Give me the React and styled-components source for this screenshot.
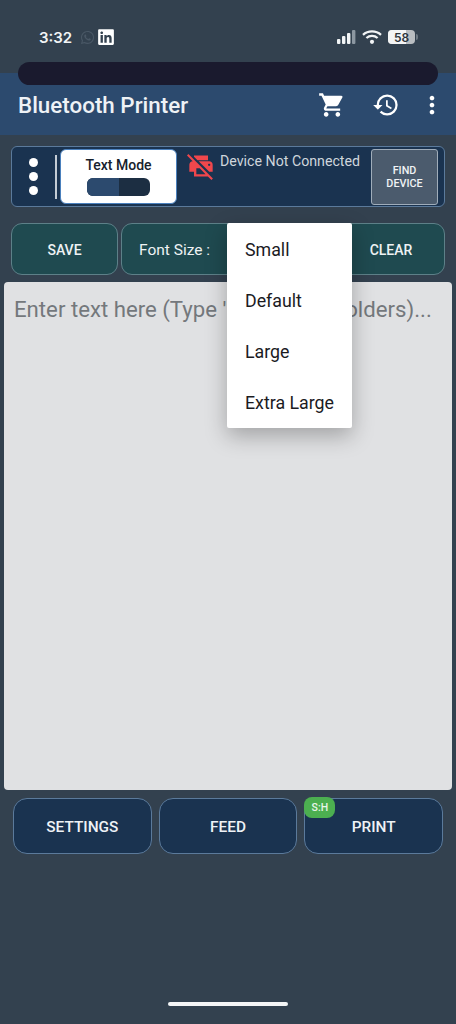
import React from 'react'
import styled, { createGlobalStyle } from 'styled-components'
import { MdShoppingCart, MdHistory, MdMoreVert, MdPrintDisabled } from 'react-icons/md'
import { FaWhatsapp, FaLinkedin } from 'react-icons/fa'

const Global = createGlobalStyle`
  html, body { margin: 0; padding: 0; background: #33414f; }
  * { box-sizing: border-box; }
`

const Screen = styled.div`
  position: relative;
  width: 456px;
  height: 1024px;
  overflow: hidden;
  background: #33414f;
  font-family: Roboto, "Liberation Sans", sans-serif;
  display: flex;
  flex-direction: column;
`

const StatusBar = styled.div`
  height: 73px;
  padding: 27px 38px 0 39px;
  display: flex;
  justify-content: space-between;
  align-items: flex-start;
  color: #f2f4f6;
`

const StatusLeft = styled.div`
  display: flex;
  align-items: center;
  height: 20px;
`

const Clock = styled.span`
  font-family: Inter, sans-serif;
  font-size: 15px;
  font-weight: 600;
  width: 41px;
`

const WhatsIcon = styled(FaWhatsapp)`
  color: #4a5866;
  font-size: 15px;
  margin-right: 2px;
`

const LinkedIcon = styled(FaLinkedin)`
  color: #fff;
  font-size: 18px;
`

const StatusRight = styled.div`
  display: flex;
  align-items: center;
  height: 20px;
`

const Battery = styled.div`
  position: relative;
  width: 27px;
  height: 14px;
  margin-left: 6px;
  border-radius: 4px;
  overflow: hidden;
  background: #b9bdc1;
  display: flex;
  align-items: center;
  justify-content: center;
  color: #2c343c;
  font-family: Inter, sans-serif;
  font-size: 12px;
  font-weight: 600;
`

const BatteryFill = styled.div`
  position: absolute;
  left: 0;
  top: 0;
  bottom: 0;
  background: #f3f4f5;
`

const BatteryLabel = styled.span`
  position: relative;
`

const BatteryCap = styled.div`
  width: 2px;
  height: 6px;
  margin-left: 1px;
  border-radius: 0 2px 2px 0;
  background: #6d7882;
`

const Notch = styled.div`
  position: absolute;
  left: 18px;
  top: 62px;
  width: 420px;
  height: 23px;
  border-radius: 12px;
  background: #1a1a2e;
`

const AppBar = styled.div`
  height: 62px;
  padding: 2px 10px 0 18px;
  background: #2c4a6e;
  display: flex;
  align-items: center;
  color: #fff;
`

const AppTitle = styled.div`
  flex: 1;
  font-size: 22.4px;
  font-weight: 500;
  color: #eef2f6;
`

const AppAction = styled.div`
  display: flex;
  font-size: ${p => p.$size}px;
  margin-right: ${p => p.$gap}px;
`

const Content = styled.div`
  padding: 11px 4px 0;
  display: flex;
  flex-direction: column;
`

const DeviceBar = styled.div`
  margin: 0 7px;
  height: 61px;
  padding: 2px 6px 2px 12px;
  display: flex;
  align-items: center;
  background: #1a3350;
  border: 1px solid #5b7a9b;
  border-radius: 6px;
`

const Dots = styled.div`
  display: flex;
  flex-direction: column;
  gap: 5px;
  width: 20px;
  margin-right: 11px;
`

const Dot = styled.div`
  width: 9px;
  height: 9px;
  margin-left: 5px;
  border-radius: 50%;
  background: #fff;
`

const Divider = styled.div`
  width: 2px;
  height: 44px;
  background: #c4ccd4;
  margin-right: 3px;
`

const ModeCard = styled.div`
  width: 117px;
  height: 55px;
  background: #fff;
  border: 1px solid #4a80bd;
  border-radius: 6px;
  padding-top: 7px;
  display: flex;
  flex-direction: column;
  align-items: center;
`

const ModeLabel = styled.div`
  color: #16212c;
  font-size: 14px;
  font-weight: 500;
  line-height: 16px;
`

const ModeTrack = styled.div`
  width: 63px;
  height: 18px;
  margin-top: 5px;
  border-radius: 6px;
  overflow: hidden;
  background: #1c2e42;
`

const ModeThumb = styled.div`
  width: 32px;
  height: 100%;
  background: #2c4a6e;
`

const DeviceStatus = styled.div`
  flex: 1;
  align-self: flex-start;
  padding: 3px 0 0 10px;
  display: flex;
  color: #cfd6dc;
  font-size: 14.2px;
  line-height: 18px;
  white-space: nowrap;
`

const OffIcon = styled(MdPrintDisabled)`
  color: #f0474c;
  font-size: 28px;
  margin-right: 5px;
  flex: none;
`

const FindButton = styled.div`
  width: 67px;
  height: 56px;
  background: #4b5b6d;
  border: 1px solid #a0adba;
  border-radius: 3px;
  display: flex;
  align-items: center;
  justify-content: center;
  text-align: center;
  color: #f0f3f5;
  font-size: 10.8px;
  font-weight: 500;
  line-height: 13px;
`

const ActionRow = styled.div`
  margin: 16px 7px 0;
  display: flex;
  gap: 3px;
`

const ActionButton = styled.div`
  flex: ${p => p.$flex};
  height: 52px;
  padding-top: 1px;
  background: #1f4a50;
  border: 1.5px solid #5d8088;
  border-radius: 11px;
  display: flex;
  align-items: center;
  justify-content: ${p => (p.$pad ? 'flex-start' : 'center')};
  padding-left: ${p => p.$pad || 0}px;
  color: #eef2f4;
  font-size: ${p => p.$size}px;
  font-weight: ${p => p.$weight};
`

const TextBox = styled.div`
  margin-top: 7px;
  height: 508px;
  padding: 13px 10px;
  background: #e0e1e3;
  border-radius: 4px;
  color: #74787c;
  font-size: 22.2px;
  line-height: 28px;
  white-space: nowrap;
  overflow: hidden;
`

const BottomRow = styled.div`
  margin: 8px 9px 0;
  display: flex;
  gap: 7px;
`

const BottomButton = styled.div`
  position: relative;
  flex: 1;
  height: 56px;
  padding-top: 1px;
  background: #1a3350;
  border: 1.5px solid #5b7a9b;
  border-radius: 14px;
  display: flex;
  align-items: center;
  justify-content: center;
  color: #eef2f6;
  font-size: 15.4px;
  font-weight: 500;
`

const Badge = styled.div`
  position: absolute;
  left: -1px;
  top: -2px;
  width: 31px;
  height: 21px;
  border-radius: 8px;
  background: #4caf50;
  color: #e8f5e9;
  display: flex;
  align-items: center;
  justify-content: center;
  font-size: 10.5px;
  font-weight: 500;
`

const Menu = styled.div`
  position: absolute;
  left: 227px;
  top: 223px;
  width: 125px;
  height: 205px;
  padding: 1px 18px 0;
  background: #fff;
  border-radius: 2px;
  box-shadow: 0 8px 22px rgba(0, 0, 0, 0.28);
  display: flex;
  flex-direction: column;
`

const MenuItem = styled.div`
  height: 51.25px;
  display: flex;
  align-items: center;
  color: #1b1b1f;
  font-size: 17.8px;
  white-space: nowrap;
`

const HomeIndicator = styled.div`
  position: absolute;
  left: 168px;
  top: 1002px;
  width: 120px;
  height: 4px;
  border-radius: 2px;
  background: #f4f5f6;
`

const SignalIcon = () => (
  <svg width="20" height="14" viewBox="0 0 20 14">
    <rect x="1" y="9" width="3.4" height="5" rx="1" fill="#f2f4f6" />
    <rect x="6" y="6" width="3.4" height="8" rx="1" fill="#f2f4f6" />
    <rect x="11" y="3" width="3.4" height="11" rx="1" fill="#f2f4f6" />
    <rect x="16" y="0" width="3.4" height="14" rx="1" fill="#8c97a1" />
  </svg>
)

const WifiIcon = () => (
  <svg width="20" height="14" viewBox="0 0 20 14" style={{ marginLeft: 6 }}>
    <path d="M1 4.8C6 .2 14 .2 19 4.8" stroke="#f2f4f6" strokeWidth="2.3" fill="none" />
    <path d="M4.4 8C7.6 5.2 12.4 5.2 15.6 8" stroke="#f2f4f6" strokeWidth="2.3" fill="none" />
    <circle cx="10" cy="11.8" r="2.1" fill="#f2f4f6" />
  </svg>
)

const App = () => {
  const sizes = ['Small', 'Default', 'Large', 'Extra Large']
  return (
    <Screen>
      <Global />
      <StatusBar>
        <StatusLeft>
          <Clock>3:32</Clock>
          <WhatsIcon />
          <LinkedIcon />
        </StatusLeft>
        <StatusRight>
          <SignalIcon />
          <WifiIcon />
          <Battery>
            <BatteryFill style={{ width: '68%' }} />
            <BatteryLabel>58</BatteryLabel>
          </Battery>
          <BatteryCap />
        </StatusRight>
      </StatusBar>
      <AppBar>
        <AppTitle>Bluetooth Printer</AppTitle>
        <AppAction $size={28} $gap={26}><MdShoppingCart /></AppAction>
        <AppAction $size={28} $gap={18}><MdHistory /></AppAction>
        <AppAction $size={28} $gap={0}><MdMoreVert /></AppAction>
      </AppBar>
      <Content>
        <DeviceBar>
          <Dots><Dot /><Dot /><Dot /></Dots>
          <Divider />
          <ModeCard>
            <ModeLabel>Text Mode</ModeLabel>
            <ModeTrack><ModeThumb /></ModeTrack>
          </ModeCard>
          <DeviceStatus>
            <OffIcon />
            Device Not Connected
          </DeviceStatus>
          <FindButton>FIND<br />DEVICE</FindButton>
        </DeviceBar>
        <ActionRow>
          <ActionButton $flex="0 0 107px" $size={14} $weight={500}>SAVE</ActionButton>
          <ActionButton $flex="1" $size={15.5} $weight={400} $pad={17}>Font Size :</ActionButton>
          <ActionButton $flex="0 0 108px" $size={14} $weight={500}>CLEAR</ActionButton>
        </ActionRow>
        <TextBox>Enter text here (Type '?' for placeholders)...</TextBox>
        <BottomRow>
          <BottomButton>SETTINGS</BottomButton>
          <BottomButton>FEED</BottomButton>
          <BottomButton>
            <Badge>S:H</Badge>
            PRINT
          </BottomButton>
        </BottomRow>
      </Content>
      <Notch />
      <Menu>
        {sizes.map(s => <MenuItem key={s}>{s}</MenuItem>)}
      </Menu>
      <HomeIndicator />
    </Screen>
  )
}

export default App
